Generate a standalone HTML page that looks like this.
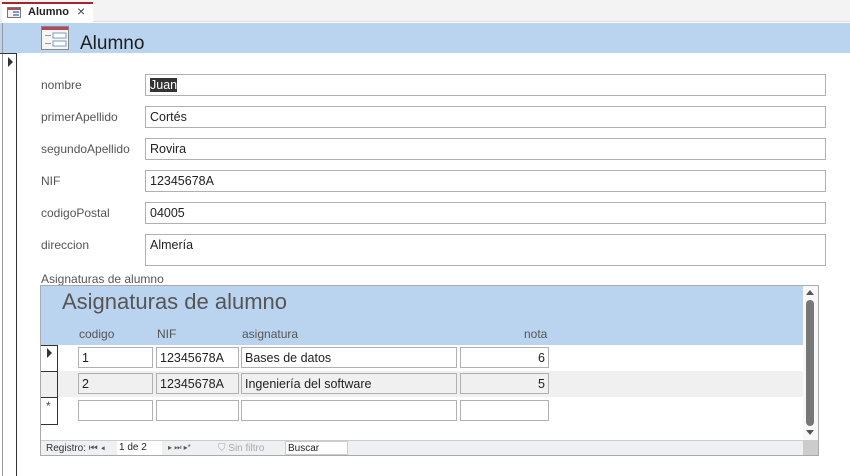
<!DOCTYPE html>
<html><head><meta charset="utf-8"><style>
*{box-sizing:border-box;margin:0;padding:0}
body{width:850px;height:476px;background:#fff;font-family:"Liberation Sans",sans-serif;position:relative;overflow:hidden;color:#222}
.a{position:absolute}
.lbl{position:absolute;left:41px;font-size:12px;color:#555}
.in{position:absolute;left:145px;width:681px;height:22px;border:1px solid #b0b0b0;background:#fff;font-size:12.5px;padding:3px 0 0 4px;color:#222}
.c{position:absolute;height:21px;border:1px solid #b0b0b0;background:#fff;font-size:12.5px;padding:3px 0 0 3px}
.h{position:absolute;top:327px;font-size:12px;color:#555}
</style></head><body>
<div class="a" style="left:0;top:0;width:850px;height:22px;background:#f3f3f3;border-bottom:1px solid #ddd"></div>
<div class="a" style="left:2px;top:2px;width:91px;height:21px;background:#fff;border-top:2px solid #a4262c"></div>
<svg class="a" style="left:7px;top:7px" width="14" height="11"><rect x=".5" y=".5" width="13" height="10" fill="#f4f4f4" stroke="#777"/><rect x="1" y="1" width="12" height="2" fill="#b04a5a"/><rect x="6" y="4" width="6" height="2" fill="#7a9cc6"/><rect x="6" y="7" width="6" height="2" fill="#7a9cc6"/></svg>
<div class="a" style="left:28px;top:6px;font-size:11px;font-weight:bold">Alumno</div>
<div class="a" style="left:77px;top:3px;font-size:14px;color:#444">×</div>
<div class="a" style="left:0;top:23px;width:850px;height:30px;background:#bad4ef"></div>
<div class="a" style="left:2px;top:23px;width:1px;height:453px;background:#999"></div>
<svg class="a" style="left:41px;top:26px" width="28" height="24"><rect x=".5" y=".5" width="27" height="23" fill="#f6f6f6" stroke="#888"/><rect x="1" y="1" width="26" height="3" fill="#b04a5a"/><rect x="12" y="7" width="13" height="5" fill="#fff" stroke="#7a9cc6"/><rect x="12" y="15" width="13" height="5" fill="#fff" stroke="#7a9cc6"/><rect x="4" y="9" width="6" height="1" fill="#999"/><rect x="4" y="17" width="6" height="1" fill="#999"/></svg>
<div class="a" style="left:80px;top:33px;font-size:19px;color:#1e1e1e">Alumno</div>
<div class="a" style="left:16px;top:53px;width:1px;height:423px;background:#333"></div>
<div class="a" style="left:0;top:53px;width:17px;height:1px;background:#333"></div>
<div class="a" style="left:8px;top:57px;width:0;height:0;border-left:5px solid #333;border-top:5px solid transparent;border-bottom:5px solid transparent"></div>
<div class="lbl" style="top:78px">nombre</div><div class="in" style="top:74px"><span style="background:#333;color:#fff">Juan</span></div>
<div class="lbl" style="top:110px">primerApellido</div><div class="in" style="top:106px">Cortés</div>
<div class="lbl" style="top:142px">segundoApellido</div><div class="in" style="top:138px">Rovira</div>
<div class="lbl" style="top:174px">NIF</div><div class="in" style="top:170px">12345678A</div>
<div class="lbl" style="top:206px">codigoPostal</div><div class="in" style="top:202px">04005</div>
<div class="lbl" style="top:238px">direccion</div><div class="in" style="top:234px;height:32px">Almería</div>
<div class="lbl" style="top:272px">Asignaturas de alumno</div>
<div class="a" style="left:40px;top:285px;width:779px;height:171px;border:1px solid #aaa;background:#fff"></div>
<div class="a" style="left:41px;top:286px;width:762px;height:59px;background:#bad4ef"></div>
<div class="a" style="left:62px;top:289px;font-size:22px;color:#555">Asignaturas de alumno</div>
<div class="h" style="left:79px">codigo</div><div class="h" style="left:157px">NIF</div><div class="h" style="left:242px">asignatura</div><div class="h" style="left:524px">nota</div>
<div class="a" style="left:41px;top:371px;width:762px;height:26px;background:#f0f0f0"></div>
<div class="a" style="left:41px;top:345px;width:17px;height:80px;border:1px solid #333;border-left:none"></div>
<div class="a" style="left:41px;top:371px;width:17px;height:1px;background:#333"></div>
<div class="a" style="left:41px;top:397px;width:17px;height:1px;background:#333"></div>
<div class="a" style="left:47px;top:348px;border-left:5px solid #333;border-top:5px solid transparent;border-bottom:5px solid transparent"></div>
<div class="a" style="left:46px;top:399px;font-size:12px;color:#444">*</div>
<div class="c" style="left:78px;top:347px;width:75px">1</div><div class="c" style="left:156px;top:347px;width:83px">12345678A</div><div class="c" style="left:241px;top:347px;width:216px">Bases de datos</div><div class="c" style="left:460px;top:347px;width:89px;text-align:right;padding-right:3px">6</div>
<div class="c" style="left:78px;top:373px;width:75px;background:#f0f0f0">2</div><div class="c" style="left:156px;top:373px;width:83px;background:#f0f0f0">12345678A</div><div class="c" style="left:241px;top:373px;width:216px;background:#f0f0f0">Ingeniería del software</div><div class="c" style="left:460px;top:373px;width:89px;text-align:right;padding-right:3px;background:#f0f0f0">5</div>
<div class="c" style="left:78px;top:400px;width:75px"></div><div class="c" style="left:156px;top:400px;width:83px"></div><div class="c" style="left:241px;top:400px;width:216px"></div><div class="c" style="left:460px;top:400px;width:89px"></div>
<div class="a" style="left:803px;top:286px;width:15px;height:154px;background:#f8f8f8"></div>
<div class="a" style="left:806px;top:300px;width:8px;height:126px;border-radius:4px;background:#777"></div>
<div class="a" style="left:806px;top:290px;border-bottom:5px solid #555;border-left:4px solid transparent;border-right:4px solid transparent"></div>
<div class="a" style="left:806px;top:430px;border-top:5px solid #555;border-left:4px solid transparent;border-right:4px solid transparent"></div>
<div class="a" style="left:41px;top:440px;width:762px;height:15px;background:#eef0f3;border-top:1px solid #ccc"></div>
<div class="a" style="left:803px;top:440px;width:15px;height:15px;background:#ccc"></div>
<div class="a" style="left:46px;top:443px;font-size:10px;color:#333;white-space:pre">Registro: <span style="color:#555">⏮ ◂</span></div>
<div class="a" style="left:117px;top:441px;width:45px;height:14px;background:#fff;font-size:10px;padding:1px 2px">1 de 2</div>
<div class="a" style="left:168px;top:443px;font-size:8px;color:#555">▸ ⏭ ▸*</div>
<div class="a" style="left:218px;top:443px;font-size:10px;color:#aaa">⛉ Sin filtro</div>
<div class="a" style="left:285px;top:441px;width:63px;height:14px;background:#fff;border:1px solid #ccc;font-size:10px;padding:1px 2px">Buscar</div>
</body></html>
